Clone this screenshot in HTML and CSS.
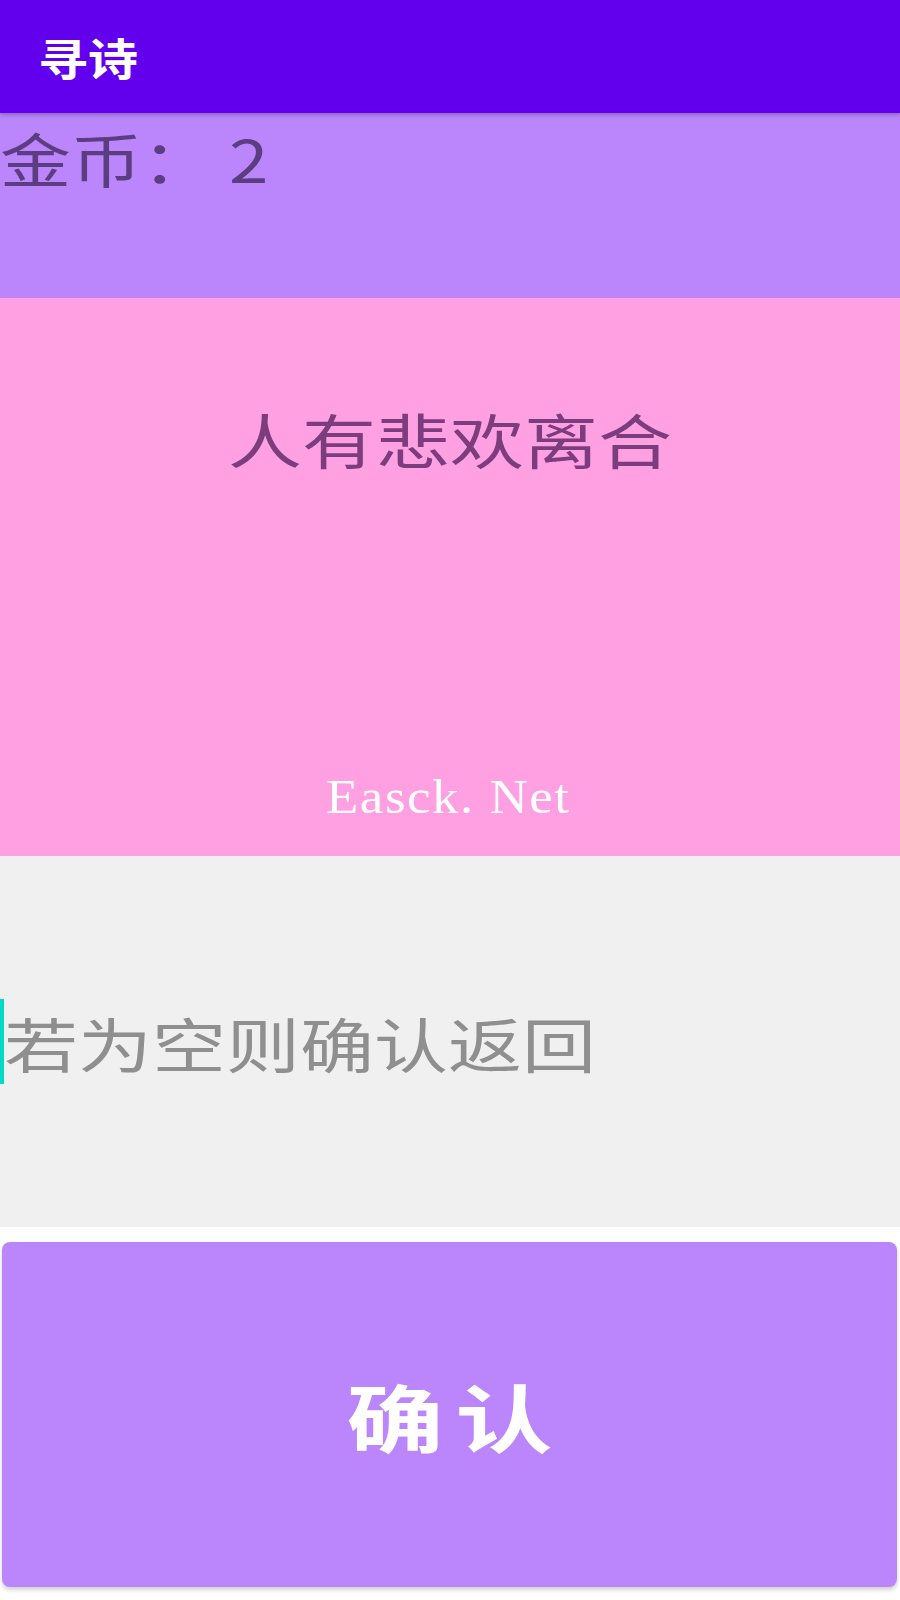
FILE: index.html
```html
<!DOCTYPE html>
<html lang="zh-CN">
<head>
<meta charset="utf-8">
<title>寻诗</title>
<link rel="stylesheet" href="styles.css">
</head>
<body>
<div class="app">
  <header class="toolbar">
    <h1 class="title">寻诗</h1>
  </header>
  <section class="coins">
    <span class="coins-text">金币： 2</span>
  </section>
  <section class="poem">
    <p class="poem-line"><span class="poem-text">人有悲欢离合</span></p>
    <span class="watermark">Easck. Net</span>
  </section>
  <section class="answer">
    <span class="cursor"></span>
    <span class="hint">若为空则确认返回</span>
  </section>
  <div class="spacer"></div>
  <button class="confirm" type="button"><span class="confirm-text">确认</span></button>
</div>
</body>
</html>
```

FILE: styles.css
```css
html, body {
  margin: 0;
  padding: 0;
  background: #ffffff;
}

body {
  font-family: "Noto Sans CJK SC", "Noto Sans", sans-serif;
}

.app {
  width: 900px;
  height: 1600px;
  display: flex;
  flex-direction: column;
  overflow: hidden;
}

.toolbar {
  height: 113px;
  flex: none;
  background: #6200ee;
  display: flex;
  align-items: center;
  padding-left: 38px;
  box-sizing: border-box;
  box-shadow: 0 2px 4px rgba(0, 0, 0, 0.25);
  position: relative;
  z-index: 2;
}

.title {
  margin: 0;
  color: #ffffff;
  font-size: 50px;
  font-weight: 700;
  line-height: 1;
  transform: scaleY(0.88);
}

.coins {
  height: 185px;
  flex: none;
  background: #bb86fc;
  box-sizing: border-box;
  padding-top: 9px;
}

.coins-text {
  display: inline-block;
  color: #5c3d82;
  font-size: 71px;
  line-height: 1;
  transform: scaleY(0.83);
}

.poem {
  height: 558px;
  flex: none;
  background: #fea0e1;
  box-sizing: border-box;
  padding-top: 103px;
  position: relative;
}

.poem-line {
  margin: 0;
  text-align: center;
  line-height: 1;
}

.poem-text {
  display: inline-block;
  color: #7b3d7d;
  font-size: 74px;
  line-height: 1;
  transform: scaleY(0.8);
}

.watermark {
  position: absolute;
  left: 326px;
  top: 472px;
  color: #ffffff;
  font-family: "Liberation Serif", serif;
  font-size: 53px;
  letter-spacing: 1.5px;
  line-height: 1;
  transform: scaleY(0.92);
}

.answer {
  height: 371px;
  flex: none;
  background: #f0f0f0;
  display: flex;
  align-items: center;
}

.cursor {
  width: 4px;
  height: 85px;
  background: #03dac5;
  flex: none;
}

.hint {
  display: inline-block;
  color: #8f8f8f;
  font-size: 74px;
  line-height: 1;
  transform: scaleY(0.8);
}

.spacer {
  height: 15px;
  flex: none;
}

.confirm {
  height: 345px;
  flex: none;
  margin: 0 3px 0 2px;
  border: none;
  border-radius: 8px;
  background: #bb86fc;
  color: #ffffff;
  font-family: "Noto Sans CJK SC", "Noto Sans", sans-serif;
  padding: 0 0 0 12px;
  box-shadow: 0 3px 4px rgba(0, 0, 0, 0.18);
}

.confirm-text {
  display: inline-block;
  font-size: 97px;
  font-weight: 700;
  letter-spacing: 12px;
  line-height: 1;
  transform: scaleY(0.76);
}
```
